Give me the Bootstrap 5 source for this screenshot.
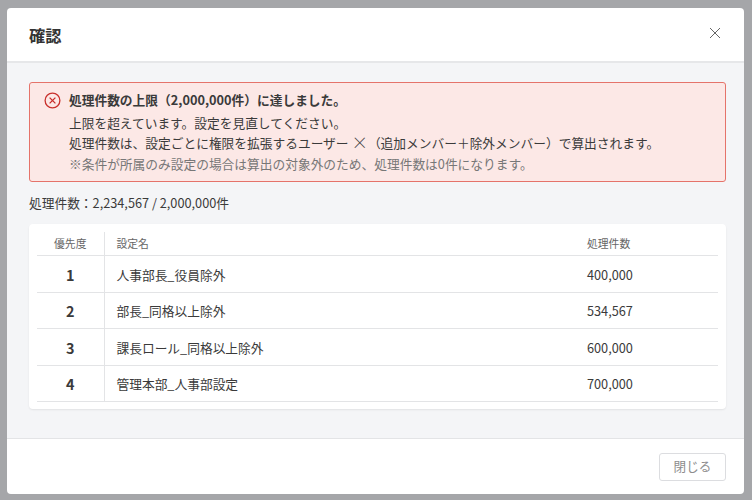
<!DOCTYPE html>
<html lang="ja">
<head>
<meta charset="utf-8">
<title>確認</title>
<link href="https://cdn.jsdelivr.net/npm/bootstrap@5.3.0/dist/css/bootstrap.min.css" rel="stylesheet">
<style>
html,body{height:500px;overflow:hidden}
body{background:#a5a6a9;font-family:"Noto Sans CJK JP","Noto Sans",sans-serif;font-size:12.72px;color:#3a3a3a;padding:8px 8px 6px 7px}
.dlg{height:486px;border:0;border-radius:4px;background:#fff;overflow:hidden;display:flex;flex-direction:column}
.dlg-head{height:55px;padding:0 22px;border-bottom:2px solid #e6e7e9;flex:none}
.dlg-title{font-size:16.2px;font-weight:700;color:#333;margin:2px 0 0;line-height:1}
.dlg-x{width:12px;height:12px;padding:0;border:0;background:none;display:block;margin:0 1px 3px 0;line-height:0}
.dlg-body{flex:1;background:#f4f5f7;padding:19px 18px 0 22px}
.warn{height:100px;background:#fce8e6;border:1px solid #e5736a;border-radius:3px;padding:8px 14px;margin-bottom:11px;gap:8px}
.warn-ic{width:17px;height:17px;flex:none;margin-top:1px}
.warn-l{line-height:20px;display:block}
.warn-t{font-weight:700;line-height:18px;margin-bottom:4px}
.warn-n{color:#777;padding-top:.5px}
.mult{font-size:16.5px;line-height:1;font-weight:300;vertical-align:-1px}
.cnt{line-height:20px;margin-bottom:11px}
.tbl-wrap{background:#fff;border-radius:4px;padding:8px 8px 7px;box-shadow:0 1px 2px rgba(0,0,0,.08)}
.tbl{width:100%;margin:0;table-layout:fixed;border-collapse:collapse}
.tbl th{font-weight:400;font-size:10.8px;color:#666;height:23.5px;padding:0 11px 0 12px;border-bottom:1px solid #e3e4e6;vertical-align:middle;background:none}
.tbl td{height:36.5px;padding:1px 11px 0 12px;border-bottom:1px solid #e3e4e6;vertical-align:middle;color:#3a3a3a;background:none}
.tbl .c1{width:67px;text-align:center;border-right:1px solid #e3e4e6;padding:0}
.tbl .c3{width:142px;padding-left:11px}
.tbl td.c1{font-size:14.4px;font-weight:700;padding-top:2px}
.tbl td.c3{padding-left:11px}
.dlg-foot{height:56px;border-top:1px solid #e3e4e6;padding:0 18px 0;flex:none}
.shut{width:67px;height:28px;padding:0;font-size:12.6px;color:#8d8d8d;background:#fff;border:1px solid #dcdde0;border-radius:3px;opacity:1}
</style>
</head>
<body>
<div class="modal-content dlg">
  <div class="dlg-head d-flex align-items-center justify-content-between">
    <h5 class="dlg-title">確認</h5>
    <button class="dlg-x" type="button" aria-label="閉じる"><svg width="12" height="12" viewBox="0 0 12 12"><path d="M1 1 11 11M11 1 1 11" stroke="#666" stroke-width="1" fill="none"/></svg></button>
  </div>
  <div class="dlg-body">
    <div class="warn d-flex">
      <svg class="warn-ic" viewBox="0 0 17 17"><circle cx="8.5" cy="8.5" r="7.4" fill="none" stroke="#c9302c" stroke-width="1.3"/><path d="M5.6 5.6 11.4 11.4M11.4 5.6 5.6 11.4" stroke="#c9302c" stroke-width="1.3" fill="none"/></svg>
      <div>
        <div class="warn-t">処理件数の上限（2,000,000件）に達しました。</div>
        <span class="warn-l">上限を超えています。設定を見直してください。</span>
        <span class="warn-l">処理件数は、設定ごとに権限を拡張するユーザー <span class="mult">×</span>（追加メンバー＋除外メンバー）で算出されます。</span>
        <span class="warn-l warn-n">※条件が所属のみ設定の場合は算出の対象外のため、処理件数は0件になります。</span>
      </div>
    </div>
    <div class="cnt">処理件数：2,234,567 / 2,000,000件</div>
    <div class="tbl-wrap">
      <table class="table tbl">
        <thead><tr><th class="c1">優先度</th><th>設定名</th><th class="c3">処理件数</th></tr></thead>
        <tbody>
          <tr><td class="c1">1</td><td>人事部長_役員除外</td><td class="c3">400,000</td></tr>
          <tr><td class="c1">2</td><td>部長_同格以上除外</td><td class="c3">534,567</td></tr>
          <tr><td class="c1">3</td><td>課長ロール_同格以上除外</td><td class="c3">600,000</td></tr>
          <tr><td class="c1">4</td><td>管理本部_人事部設定</td><td class="c3">700,000</td></tr>
        </tbody>
      </table>
    </div>
  </div>
  <div class="dlg-foot d-flex align-items-center justify-content-end">
    <button class="btn shut" type="button">閉じる</button>
  </div>
</div>
<script src="https://cdn.jsdelivr.net/npm/bootstrap@5.3.0/dist/js/bootstrap.bundle.min.js"></script>
</body>
</html>
